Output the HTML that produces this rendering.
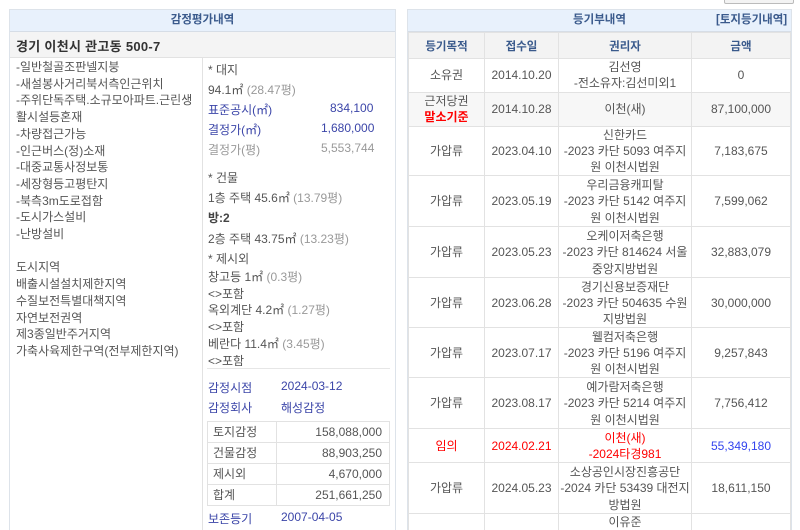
<!DOCTYPE html>
<html><head><meta charset="utf-8"><style>
*{margin:0;padding:0;box-sizing:border-box}
html,body{width:800px;height:530px;overflow:hidden}
body{background:#fff;font-family:"Liberation Sans","Noto Sans CJK KR",sans-serif;font-size:12px;color:#555;position:relative}
#w{position:absolute;left:0;top:0;width:800px;height:530px;overflow:hidden}
.a{position:absolute;white-space:nowrap}
.panel{position:absolute;border:1px solid #dde3ea;border-bottom:none;background:#fff}
.hd{position:absolute;background:#e8f1fc;border-bottom:1px solid #d6dde6;color:#3a5a8c;font-weight:bold;text-align:center;line-height:21px;font-size:11.5px}
.blue{color:#3b45a8}
.gray{color:#999}
table{border-collapse:collapse;position:absolute}
td{border:1px solid #e2e2e2;text-align:center;color:#555;line-height:16.3px;font-size:12px;padding:0}
th{border:1px solid #e2e2e2;background:#f3f3f3;color:#3a5a8c;font-size:11.5px;height:26px;padding:0}
.red{color:#f00}
</style></head><body><div id="w">
<div class="a" style="left:724px;top:-6px;width:70px;height:10px;border:1px solid #bbb;border-radius:2px;background:#f3f3f3"></div>

<div class="panel" style="left:9px;top:9px;width:387px;height:521px"></div>
<div class="hd" style="left:10px;top:10px;width:385px;height:22px">감정평가내역</div>
<div class="a" style="left:10px;top:32px;width:385px;height:26px;background:#f4f4f4;border-bottom:1px solid #e2e2e2"></div>
<div class="a" style="left:16px;top:36px;font-size:13px;color:#333;font-weight:bold;letter-spacing:.3px">경기 이천시 관고동 500-7</div>
<div class="a" style="left:202px;top:58px;width:1px;height:472px;background:#e2e2e2"></div>
<div class="a" style="left:16px;top:59px;line-height:16.7px;color:#555;font-size:12px">-일반철골조판넬지붕<br>-새설봉사거리북서측인근위치<br>-주위단독주택.소규모아파트.근린생<br>활시설등혼재<br>-차량접근가능<br>-인근버스(정)소재<br>-대중교통사정보통<br>-세장형등고평탄지<br>-북측3m도로접함<br>-도시가스설비<br>-난방설비<br><br>도시지역<br>배출시설설치제한지역<br>수질보전특별대책지역<br>자연보전권역<br>제3종일반주거지역<br>가축사육제한구역(전부제한지역)</div>

<div class="a" style="left:208px;top:61px">* 대지</div>
<div class="a" style="left:208px;top:81px">94.1㎡ <span class="gray">(28.47평)</span></div>
<div class="a blue" style="left:208px;top:101px">표준공시(㎡)</div><div class="a blue" style="left:330px;top:101px">834,100</div>
<div class="a blue" style="left:208px;top:121px">결정가(㎡)</div><div class="a blue" style="left:321px;top:121px">1,680,000</div>
<div class="a gray" style="left:208px;top:141px">결정가(평)</div><div class="a gray" style="left:321px;top:141px">5,553,744</div>
<div class="a" style="left:208px;top:169px">* 건물</div>
<div class="a" style="left:208px;top:189px">1층 주택 45.6㎡ <span class="gray">(13.79평)</span></div>
<div class="a" style="left:208px;top:209px;font-weight:bold;color:#444">방:2</div>
<div class="a" style="left:208px;top:230px">2층 주택 43.75㎡ <span class="gray">(13.23평)</span></div>
<div class="a" style="left:208px;top:250px">* 제시외</div>
<div class="a" style="left:208px;top:269px;line-height:16.7px">창고등 1㎡ <span class="gray">(0.3평)</span><br>&lt;&gt;포함<br>옥외계단 4.2㎡ <span class="gray">(1.27평)</span><br>&lt;&gt;포함<br>베란다 11.4㎡ <span class="gray">(3.45평)</span><br>&lt;&gt;포함</div>
<div class="a" style="left:207px;top:368px;width:183px;height:1px;background:#e6e6e6"></div>
<div class="a blue" style="left:208px;top:379px">감정시점</div><div class="a blue" style="left:281px;top:379px">2024-03-12</div>
<div class="a blue" style="left:208px;top:399px">감정회사</div><div class="a blue" style="left:281px;top:399px">해성감정</div>
<table style="left:207px;top:421px;width:183px">
<tr><td style="text-align:left;padding-left:5px;height:21px;width:69px">토지감정</td><td style="text-align:right;padding-right:7px">158,088,000</td></tr>
<tr><td style="text-align:left;padding-left:5px;height:21px">건물감정</td><td style="text-align:right;padding-right:7px">88,903,250</td></tr>
<tr><td style="text-align:left;padding-left:5px;height:21px">제시외</td><td style="text-align:right;padding-right:7px">4,670,000</td></tr>
<tr><td style="text-align:left;padding-left:5px;height:21px">합계</td><td style="text-align:right;padding-right:7px">251,661,250</td></tr>
</table>
<div class="a blue" style="left:208px;top:510px">보존등기</div><div class="a blue" style="left:281px;top:510px">2007-04-05</div>

<div class="panel" style="left:407px;top:9px;width:385px;height:521px"></div>
<div class="hd" style="left:408px;top:10px;width:383px;height:22px">등기부내역</div>
<div class="a" style="left:716px;top:10px;line-height:21px;color:#3a5a8c;font-weight:bold;font-size:11.5px">[토지등기내역]</div>
<table style="left:408px;top:32px;width:383px">
<tr><th style="width:76px;height:26px">등기목적</th><th style="width:74px">접수일</th><th style="width:133px">권리자</th><th>금액</th></tr>
<tr><td style="height:33px">소유권</td><td>2014.10.20</td><td>김선영<br>-전소유자:김선미외1</td><td>0</td></tr>
<tr><td style="height:34px;background:#f7f7f7">근저당권<br><b class="red">말소기준</b></td><td style="background:#f7f7f7">2014.10.28</td><td style="background:#f7f7f7">이천(새)</td><td style="background:#f7f7f7">87,100,000</td></tr>
<tr><td style="height:49px">가압류</td><td>2023.04.10</td><td>신한카드<br>-2023 카단 5093 여주지<br>원 이천시법원</td><td>7,183,675</td></tr>
<tr><td style="height:51px">가압류</td><td>2023.05.19</td><td>우리금융캐피탈<br>-2023 카단 5142 여주지<br>원 이천시법원</td><td>7,599,062</td></tr>
<tr><td style="height:51px">가압류</td><td>2023.05.23</td><td>오케이저축은행<br>-2023 카단 814624 서울<br>중앙지방법원</td><td>32,883,079</td></tr>
<tr><td style="height:50px">가압류</td><td>2023.06.28</td><td>경기신용보증재단<br>-2023 카단 504635 수원<br>지방법원</td><td>30,000,000</td></tr>
<tr><td style="height:50px">가압류</td><td>2023.07.17</td><td>웰컴저축은행<br>-2023 카단 5196 여주지<br>원 이천시법원</td><td>9,257,843</td></tr>
<tr><td style="height:51px">가압류</td><td>2023.08.17</td><td>예가람저축은행<br>-2023 카단 5214 여주지<br>원 이천시법원</td><td>7,756,412</td></tr>
<tr><td style="height:34px" class="red">임의</td><td class="red">2024.02.21</td><td class="red">이천(새)<br>-2024타경981</td><td style="color:#3344ee">55,349,180</td></tr>
<tr><td style="height:51px">가압류</td><td>2024.05.23</td><td>소상공인시장진흥공단<br>-2024 카단 53439 대전지<br>방법원</td><td>18,611,150</td></tr>
<tr><td style="height:49px"></td><td></td><td style="vertical-align:top">이유준</td><td></td></tr>
</table>
</div></body></html>
